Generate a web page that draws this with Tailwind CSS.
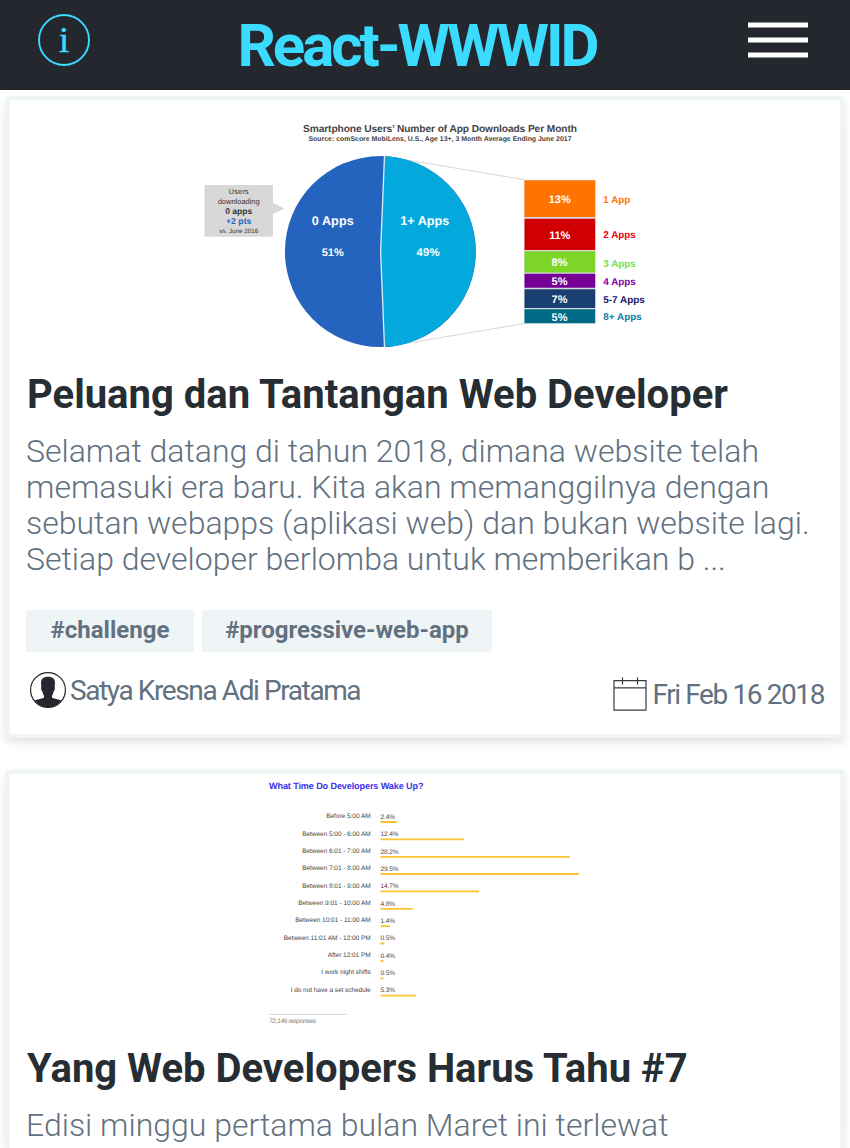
<!DOCTYPE html>
<html lang="id">
<head>
<meta charset="utf-8">
<title>React-WWWID</title>
<script src="https://cdn.jsdelivr.net/npm/@tailwindcss/browser@4"></script>
</head>
<body class="bg-white font-['Roboto',sans-serif] h-[1148px] overflow-hidden">
<header class="flex h-[90px] items-start justify-between border-b border-[#25202a] bg-[#24272e] pl-9 pr-[42px]">
  <svg class="mt-3 h-14 w-14" viewBox="0 0 56 56" fill="none">
    <circle cx="28" cy="28" r="25" stroke="#3bdbff" stroke-width="1.9"/>
    <text x="28" y="40" text-anchor="middle" font-family="Liberation Serif, serif" font-size="36.5" fill="#3bdbff" stroke="#3bdbff" stroke-width=".5">i</text>
  </svg>
  <h1 class="mt-[11px] mr-[6px] whitespace-nowrap text-[60px] leading-[70px] font-bold tracking-[-3px] text-[#3bdbff]">React-WWWID</h1>
  <svg class="mt-5 h-10 w-[60px]" viewBox="0 20 60 40" fill="#fff">
    <path d="M0 22.5h60v5H0zM0 37.5h60v5H0zM0 52.5h60v5H0z"/>
  </svg>
</header>

<main class="flex flex-col gap-8 px-1.5 pt-1.5">
  <article class="h-[642px] shrink-0 border-4 border-[#eff4f7] bg-white shadow-[0_4px_8px_rgba(0,0,0,0.1),0_6px_20px_rgba(0,0,0,0.02)]">
    <svg class="block h-[260px] w-full" viewBox="10 100 830 260" font-family="Liberation Sans, sans-serif" font-weight="bold" text-rendering="geometricPrecision">
      <g fill="#444" text-anchor="middle">
        <text x="440" y="132" font-size="10.2" textLength="274">Smartphone Users’ Number of App Downloads Per Month</text>
        <text x="440" y="141" font-size="6.9" textLength="263">Source: comScore MobiLens, U.S., Age 13+, 3 Month Average Ending June 2017</text>
      </g>
      <path d="M385 156.200L524.500 179.700M385 347L524.500 323.500" stroke="#ccc" stroke-width=".8" fill="none"/>
      <circle cx="380.400" cy="251.600" r="95.500" fill="#2564be"/>
      <path d="M384.500 156.200A95.500 95.500 0 0 1 384.500 347L380.600 251.600Z" fill="#03a9dc"/>
      <path d="M384.500 156L380.600 251.600L384.500 347" stroke="#d8effa" stroke-width="1.300" fill="none"/>
      <path d="M204.500 185h68.500v18l11.500 5.500l-11.500 5.500v22.700h-68.500z" fill="#d8d8d8"/>
      <g text-anchor="middle" fill="#333">
        <text x="238.700" y="194.300" font-size="7.3" font-weight="normal" textLength="20">Users</text>
        <text x="238.700" y="203.500" font-size="7.5" font-weight="normal" textLength="42">downloading</text>
        <text x="238.700" y="213.700" font-size="8.5" textLength="27">0 apps</text>
        <text x="238.700" y="224.200" font-size="8.7" fill="#2564be" textLength="25.500">+2 pts</text>
        <text x="238.700" y="232.500" font-size="6.3" font-weight="normal" textLength="39">vs. June 2016</text>
      </g>
      <g text-anchor="middle" fill="#fff" font-size="12.6">
        <text x="332.700" y="225" textLength="42">0 Apps</text>
        <text x="332.700" y="256" font-size="11" textLength="22">51%</text>
        <text x="424.700" y="224.500" textLength="49">1+ Apps</text>
        <text x="428" y="256" font-size="11.3" textLength="23">49%</text>
      </g>
      <rect x="524" y="180" width="71.500" height="143.500" fill="#d9d9e0"/>
      <path d="M524.500 180.300h70.700v36.700h-70.700z" fill="#ff7300"/>
      <path d="M524.500 218.700h70.700v31.300h-70.700z" fill="#d10000"/>
      <path d="M524.500 251.200h70.700v21.300h-70.700z" fill="#7dd528"/>
      <path d="M524.500 273.800h70.700v14h-70.700z" fill="#750094"/>
      <path d="M524.500 289.200h70.700v18.700h-70.700z" fill="#193f72"/>
      <path d="M524.500 309.300h70.700v13.900h-70.700z" fill="#006a87"/>
      <g text-anchor="middle" fill="#fff" font-size="11">
        <text x="559.700" y="203.200" textLength="22">13%</text>
        <text x="559.700" y="238.700" textLength="21">11%</text>
        <text x="559.500" y="266.300">8%</text>
        <text x="559.500" y="285.200">5%</text>
        <text x="559.500" y="303.200">7%</text>
        <text x="559.500" y="320.500">5%</text>
      </g>
      <g font-size="9.9">
        <text x="603.300" y="202.800" fill="#ff7300" textLength="27">1 App</text>
        <text x="603.300" y="238.300" fill="#f00008" textLength="32.500">2 Apps</text>
        <text x="603.300" y="267" fill="#76e04a" textLength="32.500">3 Apps</text>
        <text x="603.300" y="285.200" fill="#8500a8" textLength="32.500">4 Apps</text>
        <text x="603.300" y="303" fill="#16156a" textLength="41.500">5-7 Apps</text>
        <text x="603.300" y="320.300" fill="#0a7da5" textLength="38.500">8+ Apps</text>
      </g>
    </svg>
    <div class="px-4">
      <h2 class="mt-[11px] ml-px whitespace-nowrap text-[40px] leading-[47px] font-bold text-[#262d33]">Peluang dan Tantangan Web Developer</h2>
      <p class="mt-[15px] whitespace-nowrap text-[32px] leading-9 font-light text-[#62717f]">Selamat datang di tahun 2018, dimana website telah<br>memasuki era baru. Kita akan memanggilnya dengan<br>sebutan webapps (aplikasi web) dan bukan website lagi.<br>Setiap developer berlomba untuk memberikan b ...</p>
      <div class="mt-[33px] flex gap-2 text-2xl font-bold text-[#62717f]">
        <span class="flex h-[42px] w-[168px] justify-center bg-[#eff4f7] leading-[41px]">#challenge</span>
        <span class="flex h-[42px] w-[290px] justify-center bg-[#eff4f7] leading-[41px]">#progressive-web-app</span>
      </div>
      <div class="mt-5 flex items-start justify-between pl-1 text-[28px] leading-[38px] tracking-[-1.4px] text-[#62717f]">
        <div class="flex gap-1">
          <svg class="h-9 w-9" viewBox="0 0 36 36">
            <circle cx="18" cy="18" r="17.400" fill="#fff" stroke="#24272e" stroke-width="1.200"/>
            <path d="M18 4.700c-4.700 0-7 2.200-7 6.300l.3 4c-.7 1.200.2 3.700 1.100 4.700.4 1.600.9 3 1.600 4.100v1.800c-1.500 1.300-5.800 1.400-9.300 3.100C7.500 32.900 12.500 35.400 18 35.400s10.500-2.500 13.300-6.700c-3.500-1.700-7.800-1.800-9.300-3.100v-1.800c.7-1.100 1.200-2.500 1.600-4.100.9-1 1.800-3.500 1.100-4.700l.3-4c0-4.100-2.300-6.300-7-6.300z" fill="#24272e"/>
          </svg>
          <span>Satya Kresna Adi Pratama</span>
        </div>
        <div class="mt-1 flex gap-1.5">
          <svg class="mt-px h-[34px] w-[34px]" viewBox="613 677 34 34" fill="none" stroke="#3a3a44" stroke-width="1.200">
            <path d="M614 680.700h32v29.500h-32zM614 687.900h32M622.500 677.500v7M637.500 677.500v7"/>
          </svg>
          <span>Fri Feb 16 2018</span>
        </div>
      </div>
    </div>
  </article>

  <article class="h-[378px] shrink-0 overflow-hidden border-4 border-b-0 border-[#eff4f7] bg-white shadow-[0_4px_8px_rgba(0,0,0,0.1),0_6px_20px_rgba(0,0,0,0.02)]">
    <svg class="block h-[260px] w-full" viewBox="10 774 830 260" font-family="Liberation Sans, sans-serif" font-size="6.500" fill="#444" text-rendering="geometricPrecision">
      <text x="269" y="789.300" font-size="9.1" font-weight="bold" fill="#3a32e8" textLength="154.500">What Time Do Developers Wake Up?</text>
      <g text-anchor="end">
        <text x="370.700" y="818.200" textLength="44.500">Before 5:00 AM</text>
        <text x="370.700" y="835.600" textLength="68.500">Between 5:00 - 6:00 AM</text>
        <text x="370.700" y="852.900" textLength="68.500">Between 6:01 - 7:00 AM</text>
        <text x="370.700" y="870.300" textLength="68.500">Between 7:01 - 8:00 AM</text>
        <text x="370.700" y="887.600" textLength="68.500">Between 8:01 - 9:00 AM</text>
        <text x="370.700" y="905" textLength="72.500">Between 9:01 - 10:00 AM</text>
        <text x="370.700" y="922.300" textLength="75.500">Between 10:01 - 11:00 AM</text>
        <text x="370.700" y="939.700" textLength="87">Between 11:01 AM - 12:00 PM</text>
        <text x="370.700" y="957" textLength="43">After 12:01 PM</text>
        <text x="370.700" y="974.400" textLength="49.500">I work night shifts</text>
        <text x="370.700" y="991.700" textLength="80">I do not have a set schedule</text>
      </g>
      <g>
        <text x="380.500" y="818.800" textLength="14.500">2.4%</text>
        <text x="380.500" y="836.100" textLength="18">12.4%</text>
        <text x="380.500" y="853.500" textLength="18">28.2%</text>
        <text x="380.500" y="870.800" textLength="18">29.5%</text>
        <text x="380.500" y="888.200" textLength="18">14.7%</text>
        <text x="380.500" y="905.500" textLength="14.500">4.8%</text>
        <text x="380.500" y="922.900" textLength="14.500">1.4%</text>
        <text x="380.500" y="940.200" textLength="14.500">0.5%</text>
        <text x="380.500" y="957.500" textLength="14.500">0.4%</text>
        <text x="380.500" y="974.900" textLength="14.500">0.5%</text>
        <text x="380.500" y="992.300" textLength="14.500">5.3%</text>
      </g>
      <path d="M380.500 822h16.300M380.500 839.400h83.200M380.500 856.800h189.500M380.500 874h198.300M380.500 891.300h98.500M380.500 908.800h32.200M380.500 926.200h9.500M380.500 943.500h4M380.500 961h3M380.500 978.300h3M380.500 995.700h35.500" stroke="#fcc230" stroke-width="1.800"/>
      <path d="M269 1014.400h78" stroke="#ccc" stroke-width=".8"/>
      <text x="269" y="1023.300" font-style="italic" fill="#808080" textLength="47">72,146 responses</text>
    </svg>
    <div class="px-4">
      <h2 class="mt-[11px] ml-px whitespace-nowrap text-[40px] leading-[47px] font-bold text-[#262d33]">Yang Web Developers Harus Tahu #7</h2>
      <p class="mt-[15px] whitespace-nowrap text-[32px] leading-9 font-light text-[#62717f]">Edisi minggu pertama bulan Maret ini terlewat</p>
    </div>
  </article>
</main>
</body>
</html>
